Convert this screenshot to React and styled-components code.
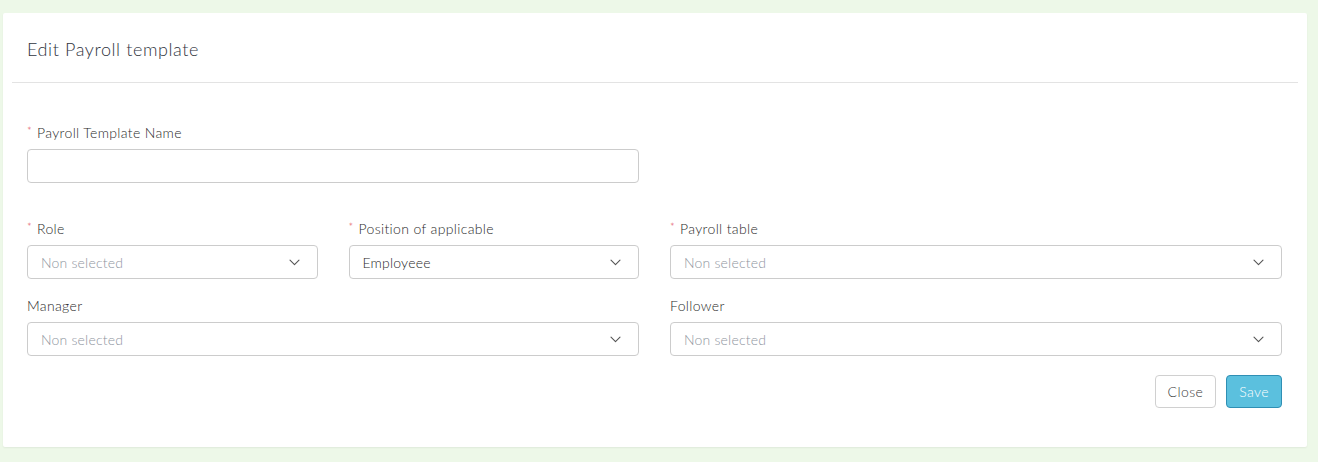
import React from 'react';
import styled, { createGlobalStyle } from 'styled-components';

const GlobalStyle = createGlobalStyle`
  html, body {
    margin: 0;
    padding: 0;
    background: #edf8e8;
  }
  body {
    font-family: Lato, "Open Sans", Arial, sans-serif;
    font-weight: 300;
    color: #333;
  }
  * {
    box-sizing: border-box;
  }
`;

function Chevron() {
  return (
    <svg width="11" height="7" viewBox="0 0 11 7" fill="none">
      <path d="M1 1.2l4.5 4.5 4.5-4.5" stroke="#555" strokeWidth="1.1" strokeLinecap="round" strokeLinejoin="round" />
    </svg>
  );
}

function Select({ value, placeholder = 'Non selected' }) {
  return (
    <SelectBox>
      <SelectText $empty={!value}>{value || placeholder}</SelectText>
      <Chevron />
    </SelectBox>
  );
}

function Label({ required, children }) {
  return (
    <LabelText>
      {required && <Star>*</Star>}
      {children}
    </LabelText>
  );
}

export default function App() {
  return (
    <Page>
      <GlobalStyle />
      <Card>
        <CardHeader>
          <CardTitle>Edit Payroll template</CardTitle>
        </CardHeader>
        <CardBody>
          <FieldGrid>
            <Field $span={6}>
              <Label required>Payroll Template Name</Label>
              <TextInput />
            </Field>
          </FieldGrid>
          <FieldGrid $top={36}>
            <Field $span={3}>
              <Label required>Role</Label>
              <Select />
            </Field>
            <Field $span={3}>
              <Label required>Position of applicable</Label>
              <Select value="Employeee" />
            </Field>
            <Field $span={6}>
              <Label required>Payroll table</Label>
              <Select />
            </Field>
            <Field $span={6}>
              <Label>Manager</Label>
              <Select />
            </Field>
            <Field $span={6}>
              <Label>Follower</Label>
              <Select />
            </Field>
          </FieldGrid>
          <Actions>
            <Button>Close</Button>
            <Button $primary>Save</Button>
          </Actions>
        </CardBody>
      </Card>
    </Page>
  );
}

const Page = styled.div`
  padding: 13px 11px 14px 3px;
`;

const Card = styled.div`
  background: #fff;
  border-radius: 2px;
  box-shadow: 0 1px 2px rgba(0, 0, 0, 0.06);
`;

const CardHeader = styled.div`
  display: flex;
  align-items: center;
  height: 70px;
  margin: 0 9px;
  padding: 2px 15px 0;
  border-bottom: 1px solid #e3e3e3;
`;

const CardTitle = styled.h4`
  margin: 0;
  font-size: 18px;
  font-weight: 300;
  letter-spacing: 0.6px;
  color: #2f3440;
`;

const CardBody = styled.div`
  padding: 40px 25px 39px 24px;
`;

const FieldGrid = styled.div`
  display: grid;
  grid-template-columns: repeat(12, 1fr);
  column-gap: 31px;
  row-gap: 17px;
  margin-top: ${p => p.$top || 0}px;
`;

const Field = styled.div`
  grid-column: span ${p => p.$span};
  display: flex;
  flex-direction: column;
`;

const LabelText = styled.label`
  display: block;
  height: 20px;
  line-height: 20px;
  margin-bottom: 6px;
  font-size: 14px;
  letter-spacing: 0.35px;
  color: #2a2a2a;
`;

const Star = styled.span`
  color: #e0424b;
  font-size: 11px;
  vertical-align: top;
  margin-right: 5px;
  line-height: 16px;
`;

const TextInput = styled.div`
  height: 34px;
  border: 1px solid #ccc;
  border-radius: 4px;
  background: #fff;
`;

const SelectBox = styled.div`
  display: flex;
  align-items: center;
  justify-content: space-between;
  height: 34px;
  padding: 0 17px 0 13px;
  border: 1px solid #ccc;
  border-radius: 4px;
  background: #fff;
`;

const SelectText = styled.span`
  font-size: 14px;
  letter-spacing: 0.2px;
  color: ${p => (p.$empty ? '#8e949e' : '#1f1f1f')};
`;

const Actions = styled.div`
  display: flex;
  justify-content: flex-end;
  gap: 10px;
  margin-top: 19px;
`;

const Button = styled.button`
  height: 33px;
  padding: 0 12px;
  border-radius: 4px;
  font-family: inherit;
  font-weight: 300;
  font-size: 14px;
  letter-spacing: 0.4px;
  cursor: pointer;
  border: 1px solid ${p => (p.$primary ? '#2f8fb4' : '#d0d0d0')};
  background: ${p => (p.$primary ? '#5bc0de' : '#fff')};
  color: ${p => (p.$primary ? '#fff' : '#3a3a3a')};
`;
